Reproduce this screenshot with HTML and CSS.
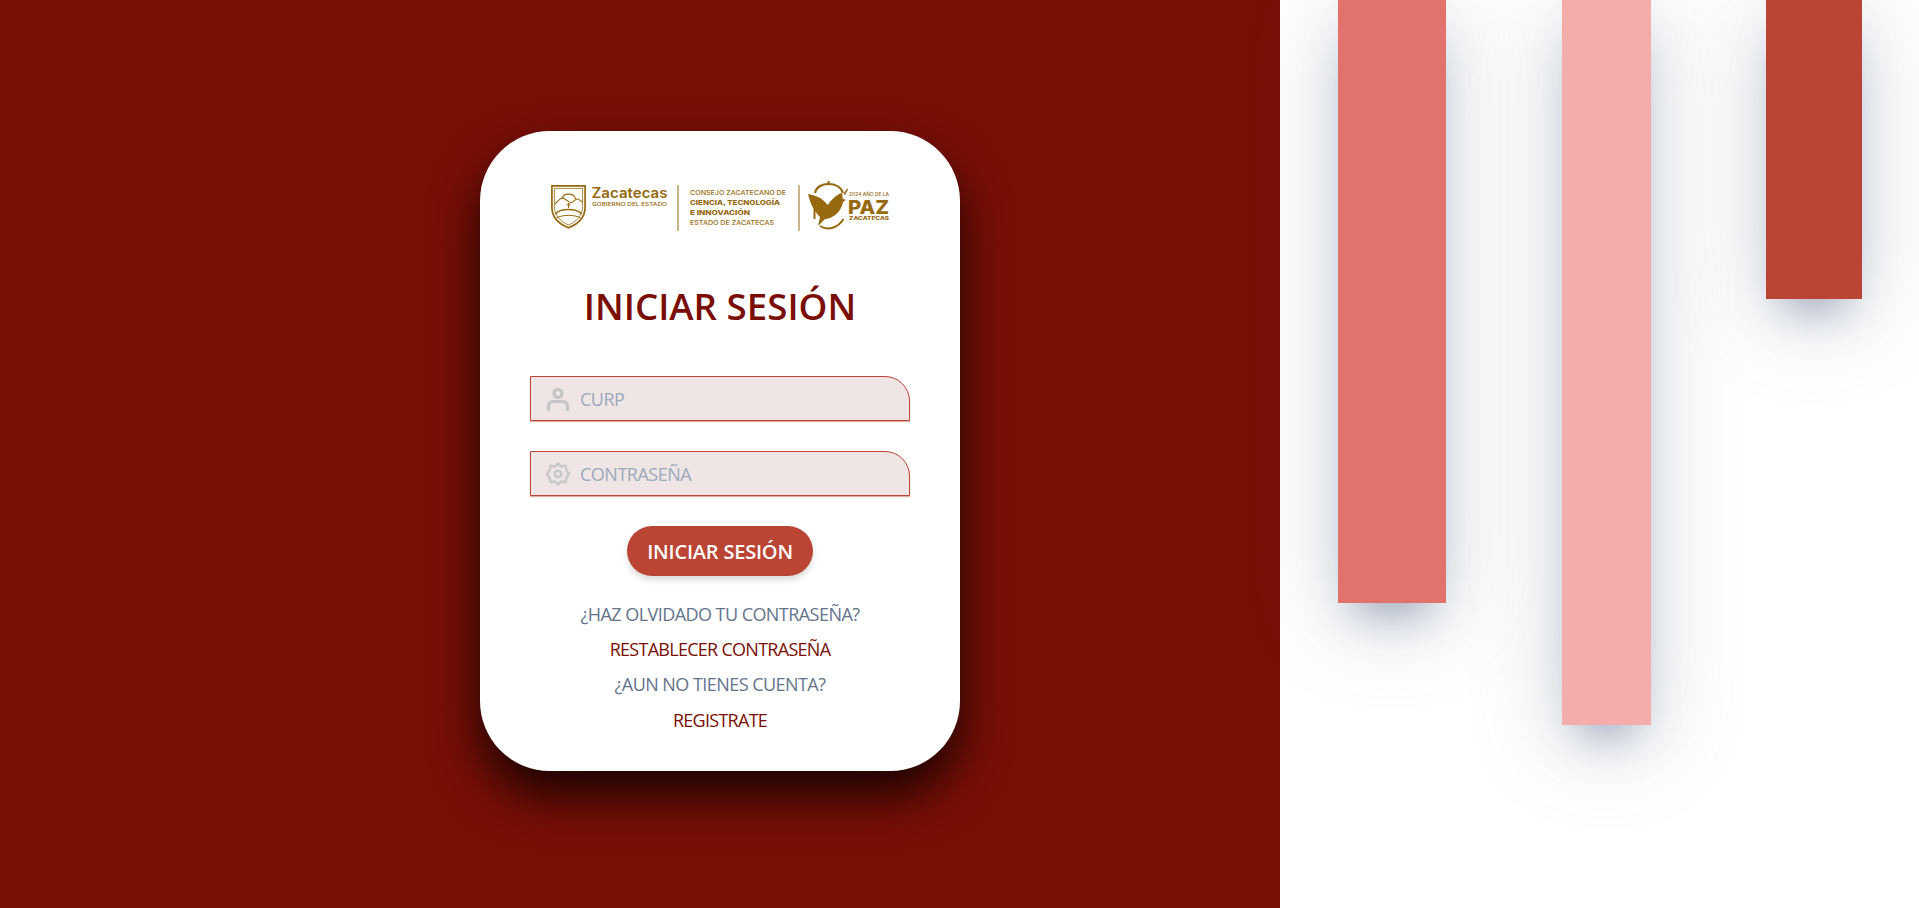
FILE: index.html
```html
<!DOCTYPE html>
<html lang="es">
<head>
<meta charset="utf-8">
<title>Iniciar sesión</title>
<link rel="stylesheet" href="styles.css">
</head>
<body>
<main class="page">
  <section class="left">
    <form class="card">
      <svg class="logo" viewBox="540 180 360 55" width="360" height="55" aria-label="Zacatecas">
        <g fill="none" stroke="#96690f">
          <path stroke-width="1.7" d="M551.9 185.900H585.100V207C585.100 218 577 224.500 568.500 227.800C560 224.500 551.900 218 551.900 207Z"/>
          <path stroke-width=".8" d="M554.400 188.400H582.600V206.500C582.600 216 575.500 222 568.500 225C561.500 222 554.400 216 554.400 206.500Z"/>
          <path stroke-width="1.100" d="M562 199C563 192.500 574 192.500 575.500 199"/>
          <path stroke-width="1.100" d="M555 204C558 201 560.500 197.500 563 198C567 199.500 569 203 571 203C574 201 576 198.500 578 199C580 200 581 201.500 582.500 202"/>
          <path stroke-width="1.500" d="M555.500 214C560 208 577 208 581.500 214"/>
          <path stroke-width="1" d="M568.500 203V208M566.500 204.800H570.500"/>
          <path stroke-width="1" d="M556.500 218C562 214.500 575 214.500 580.500 218"/>
        </g>
        <text class="l-zac" x="591.500" y="198" textLength="76" lengthAdjust="spacingAndGlyphs">Zacatecas</text>
        <text class="l-tiny" x="592" y="206" textLength="75" lengthAdjust="spacingAndGlyphs">GOBIERNO DEL ESTADO</text>
        <rect class="l-rule" x="677.500" y="185" width="1" height="46"/>
        <text class="l-line" x="690" y="194.500" textLength="96" lengthAdjust="spacingAndGlyphs">CONSEJO ZACATECANO DE</text>
        <text class="l-line l-b" x="690" y="204.500" textLength="90" lengthAdjust="spacingAndGlyphs">CIENCIA, TECNOLOGÍA</text>
        <text class="l-line l-b" x="690" y="214.500" textLength="60" lengthAdjust="spacingAndGlyphs">E INNOVACIÓN</text>
        <text class="l-line" x="690" y="224.500" textLength="84" lengthAdjust="spacingAndGlyphs">ESTADO DE ZACATECAS</text>
        <rect class="l-rule" x="798.500" y="185" width="1" height="46"/>
        <path fill="none" stroke="#96690f" stroke-width="2.200" d="M815 193C816 187 822 184 828.500 184C835 184 841 187 843 193"/>
        <path fill="none" stroke="#96690f" stroke-width="2" d="M814.500 204V219M820 226C828 231 838 228 843.500 219"/>
        <g fill="#96690f">
          <rect x="827.500" y="181" width="2" height="3"/>
          <path d="M808 194C814 195 820 197 824 201C826 203 827 204 828 205C830 201 834 197 839 194L842 193C843 196 842 198 843 199L846 200L843 202C842 208 838 214 832 217C829 218.500 827 219 825 219L818 226L820 217C814 211 810 203 808 194Z"/>
          <path d="M843.500 194L847 188.500L848 189.500L845 195Z"/>
        </g>
        <text class="l-tiny l-s" x="849" y="195.500" textLength="40" lengthAdjust="spacingAndGlyphs">2024 AÑO DE LA</text>
        <text class="l-paz" x="848" y="214" textLength="41" lengthAdjust="spacingAndGlyphs">PAZ</text>
        <text class="l-tiny l-b l-s" x="849" y="220" textLength="40" lengthAdjust="spacingAndGlyphs">ZACATECAS</text>
      </svg>
      <h1 class="title">INICIAR SESIÓN</h1>
      <label class="field">
        <svg class="field-icon" viewBox="0 0 24 24" width="24" height="24" fill="none" stroke="#c4c4c4" stroke-width="3.200" stroke-linecap="round">
          <circle cx="12" cy="6.500" r="4"/>
          <path d="M2.500 22.500V19C2.500 16 5 14.500 8 14.500H16C19 14.500 21.500 16 21.500 19V22.500"/>
        </svg>
        <input class="field-input" type="text" placeholder="CURP">
      </label>
      <label class="field">
        <svg class="field-icon" viewBox="0 0 24 24" width="24" height="24" fill="none" stroke="#c9c9c9" stroke-width="2.600" stroke-linejoin="round">
          <path d="M12 1.500L15 4.500L19.500 3.800L20.300 8L23 12L20.300 16L19.500 20.200L15 19.500L12 22.500L9 19.500L4.500 20.200L3.700 16L1 12L3.700 8L4.500 3.800L9 4.500Z"/>
          <circle cx="12" cy="12" r="3.300"/>
        </svg>
        <input class="field-input" type="password" placeholder="CONTRASEÑA">
      </label>
      <button class="submit" type="button">INICIAR SESIÓN</button>
      <p class="note">¿HAZ OLVIDADO TU CONTRASEÑA?</p>
      <a class="link" href="#">RESTABLECER CONTRASEÑA</a>
      <p class="note">¿AUN NO TIENES CUENTA?</p>
      <a class="link" href="#">REGISTRATE</a>
    </form>
  </section>
  <aside class="right">
    <div class="bar bar-one"></div>
    <div class="bar bar-two"></div>
    <div class="bar bar-three"></div>
  </aside>
</main>
</body>
</html>
```

FILE: styles.css
```css
* { box-sizing: border-box; }
html, body { margin: 0; height: 100%; }
body { font-family: "Open Sans", "Noto Sans", sans-serif; background: #fff; overflow: hidden; }
.page { display: flex; height: 908px; }
.left { width: 1280px; background: #7a0f06; display: flex; align-items: center; justify-content: center; padding: 0 0 6px 160px; }
.card {
  width: 480px; height: 640px; background: #fff; border-radius: 70px;
  box-shadow: 0 25px 50px rgba(0,0,0,.8);
  display: flex; flex-direction: column; align-items: center; padding-top: 49px;
}
.logo { display: block; flex: none; }
.l-zac { font: 600 14px "Inter", sans-serif; fill: #96690f; }
.l-tiny { font: 500 5.200px "Inter", sans-serif; fill: #96690f; }
.l-s { font-size: 4.500px; }
.l-line { font: 500 6.500px "Inter", sans-serif; fill: #96690f; }
.l-b { font-weight: 800; }
.l-paz { font: 800 19px "Inter", sans-serif; fill: #96690f; }
.l-rule { fill: #96690f; }
.title { margin: 46px 0 0; font-size: 36.700px; line-height: 50px; font-weight: 600; color: #7a0e05; }
.field {
  width: 380px; height: 45px; margin-top: 30px; padding-left: 15px; display: flex; align-items: center; gap: 10px;
  background: #eee5e4; border: 1px solid #bf4436; border-top-right-radius: 25px;
  box-shadow: 0 1px 1px rgba(192,71,58,.5);
}
.title + .field { margin-top: 45px; }
.field-input {
  flex: 1; min-width: 0; height: 100%; border: 0; padding: 0; outline: 0; background: none;
  font: 400 18px "Open Sans", sans-serif; color: #333; letter-spacing: -.5px;
}
.field-input::placeholder { color: #9ca9be; opacity: 1; }
.field-icon { flex: none; }
.submit {
  width: 186px; height: 50px; margin: 30px 0 21px; border: 0; border-radius: 25px; background: #ba4535;
  color: #fff; font: 600 20px "Open Sans", sans-serif; letter-spacing: -.2px; box-shadow: 0 4px 6px rgba(0,0,0,.15);
}
.note, .link { display: block; margin: 0; font-size: 18px; line-height: 35.200px; text-decoration: none; }
.note { color: #64748b; letter-spacing: -.55px; }
.link { color: #7a0e05; letter-spacing: -.72px; }
.right { flex: 1; display: flex; justify-content: space-between; align-items: flex-start; padding: 0 57px 0 58px; }
.bar { box-shadow: 0 15px 90px rgba(100,116,139,.3), 0 28px 40px -18px rgba(90,110,145,.5); }
.bar-one { width: 108px; height: 603px; background: #e1736c; }
.bar-two { width: 89px; height: 725px; background: #f5adac; }
.bar-three { width: 96px; height: 299px; background: #ba4535; }
```
